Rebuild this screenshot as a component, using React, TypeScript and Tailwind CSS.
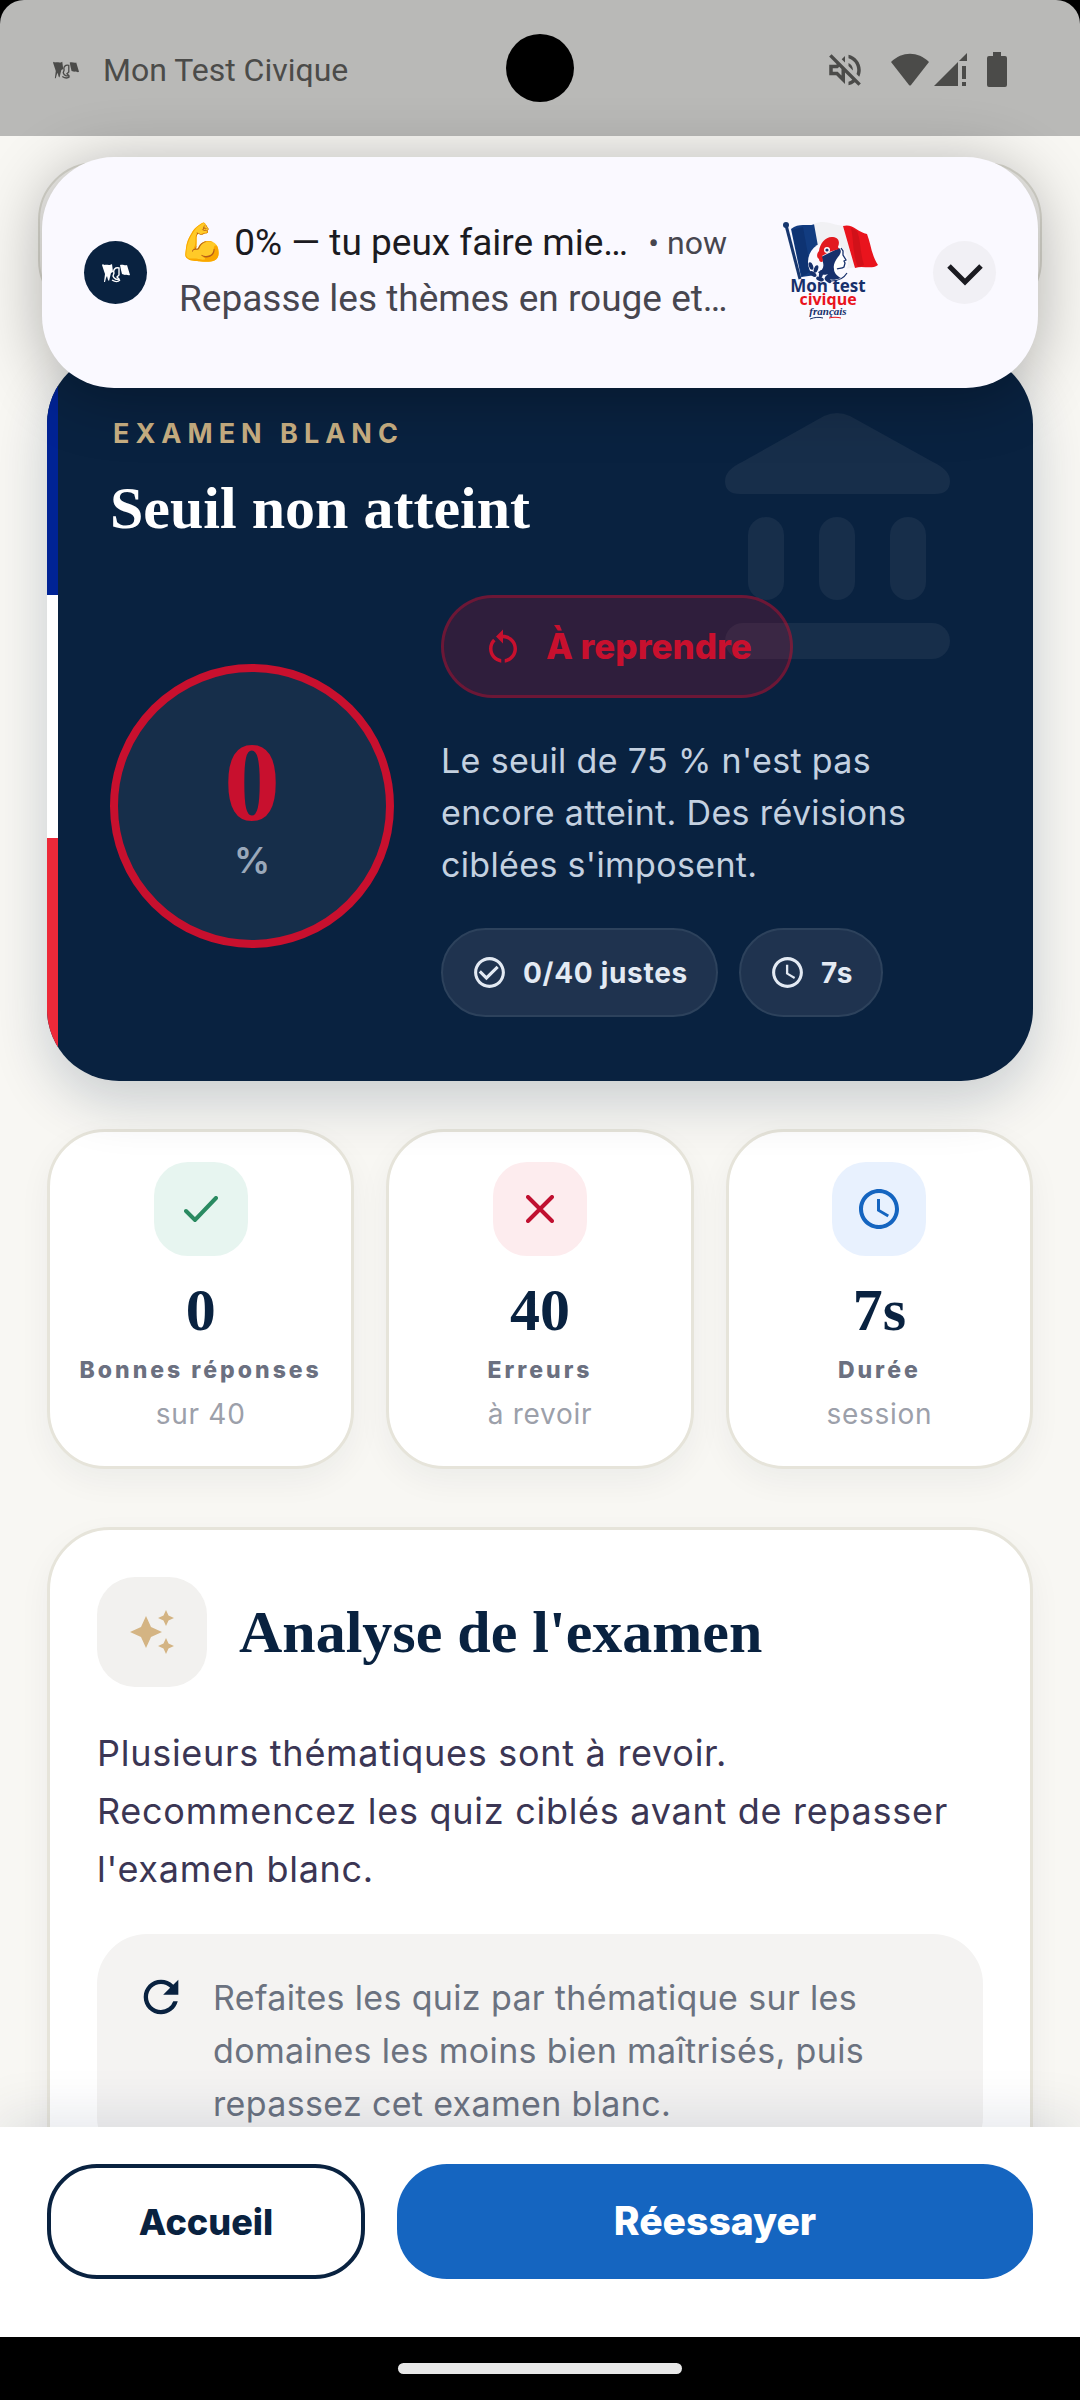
import type { ReactNode } from 'react';
import clsx from 'clsx';
import {
  MdAutoAwesome,
  MdCheckCircleOutline,
  MdOutlineVolumeOff,
  MdRefresh,
  MdRestartAlt,
  MdSchedule,
} from 'react-icons/md';

const sans = "font-['Inter','Liberation_Sans',sans-serif]";
const serif = "font-['Liberation_Serif',serif] font-bold";
const roboto = "font-['Roboto','Liberation_Sans',sans-serif]";

function FlagsGlyph({ className }: { className?: string }) {
  return (
    <svg viewBox="0 0 28 20" className={className} fill="currentColor" aria-hidden="true">
      <path d="M0 2l1-1 1 1c3-1 5 1 8-1l1 8-2 1-2 8-1-1-1-4-1 2-1 4H2l1-8z" />
      <path d="M18 2c3-1 5 1 7 0l3 10c-2 1-3-1-5 0l-3-1-1-4z" />
      <path
        d="M17 5c-4-1-6 2-5 5l-1 3c1 3 4 4 6 3l-2-2 2-2v-3zM10 17c3 2 6 2 8 0"
        fill="none"
        stroke="currentColor"
        strokeWidth="1.4"
      />
    </svg>
  );
}

function BrandLogo() {
  return (
    <svg viewBox="0 0 96 104" className="h-[104px] w-24 shrink-0" role="img" aria-label="Mon test civique français">
      <path d="M8 8C16 1 24 6 32 3l9 50-23 3z" fill="#123c80" />
      <path d="M20 6l8 44-9 6L9 9z" fill="#0a2a63" opacity=".5" />
      <path d="M31 3c11-5 18 1 30 2l11 41-32 7z" fill="#f1f1f4" />
      <path d="M60 5c9-3 15 6 24 8 4 10 4 20 11 31-7 5-15 0-23 3z" fill="#e9141d" />
      <path d="M68 7c3 12 1 25 7 39l6-2c-4-12-3-24-7-34z" fill="#b90d16" opacity=".5" />
      <path d="M3 4l14 54" stroke="#17376f" strokeWidth="3" />
      <circle cx="3" cy="4" r="3" fill="#17376f" />
      <circle cx="45" cy="41" r="20" fill="#faf9ff" />
      {/* profile */}
      <path d="M55 25l5 3 1 6 3 5-3 1v4l-2 3-5 1 1 6 4 4H44z" fill="#fff" />
      <path d="M58 27l2 3v4l3 5-2 1 1 2-1 4c-2 2-5 1-7 2" fill="none" stroke="#17306b" strokeWidth="1.3" />
      <path d="M38 36l18-9c3 2 2 6-1 9-3 4-5 8-4 12 0 4 3 7 7 9-7 3-13 2-16-1l3-3c-5 2-9 0-10-2 6-2 7-7 3-15z" fill="#17306b" />
      <path d="M36 38c-3-2-2-6 0-8 1-8 7-15 14-14 6 1 7 5 5 10l1 2-10 3-7 4 1 5c-1 2-4 1-4-2z" fill="#e21a20" />
      <circle cx="44" cy="29" r="3" fill="#fff" />
      <circle cx="44" cy="29" r="1.6" fill="#17306b" />
      {/* laurel */}
      <g fill="#17306b">
        <ellipse cx="28" cy="45" rx="2" ry="4" transform="rotate(-20 28 45)" />
        <ellipse cx="33" cy="48" rx="2" ry="4" transform="rotate(20 33 48)" />
        <ellipse cx="30" cy="53" rx="2" ry="4" transform="rotate(-55 30 53)" />
        <ellipse cx="38" cy="53" rx="2" ry="4" transform="rotate(10 38 53)" />
        <ellipse cx="37" cy="58" rx="2" ry="4" transform="rotate(-70 37 58)" />
        <ellipse cx="45" cy="59" rx="2" ry="4" transform="rotate(-50 45 59)" />
      </g>
      <path d="M48 60c8 0 13-3 16-8" fill="none" stroke="#17306b" strokeWidth="1.2" />
      <g textAnchor="middle" fontFamily="'Open Sans', sans-serif" fontWeight="700">
        <text x="45" y="71" fontSize="17" fill="#17306b">Mon test</text>
        <text x="45" y="84" fontSize="16" fill="#e9141d">civique</text>
      </g>
      <text
        x="45"
        y="94"
        fontSize="11"
        textAnchor="middle"
        fontFamily="'Liberation Serif', serif"
        fontStyle="italic"
        fontWeight="700"
        fill="#17306b"
      >
        français
      </text>
      <path d="M27 98c5-2 9-2 13-1" stroke="#17306b" strokeWidth="1" fill="none" />
      <path d="M46 97c4-1 8-1 12 0" stroke="#e9141d" strokeWidth="1" fill="none" />
    </svg>
  );
}

function StatusBar() {
  return (
    <header
      className={clsx(
        roboto,
        'relative flex h-[136px] shrink-0 items-center justify-between rounded-t-3xl bg-[#b9b9b7] pt-1 pr-[72px] pl-[53px] text-[#4b4b49]',
      )}
    >
      <div className="flex items-center gap-6">
        <FlagsGlyph className="h-5 w-[26px]" />
        <span className="text-[32px] leading-10">Mon Test Civique</span>
      </div>
      <span className="absolute top-[34px] left-1/2 size-[68px] -translate-x-1/2 rounded-full bg-black" />
      <div className="flex items-center">
        <MdOutlineVolumeOff className="mr-6 size-[42px]" />
        <svg viewBox="0 0 40 34" className="mr-1 h-[34px] w-10" fill="currentColor" aria-hidden="true">
          <path d="M1 9C12-2 28-2 39 9L21 32q-1 1-2 0z" />
        </svg>
        <svg viewBox="0 0 34 34" className="mr-[18px] h-[34px] w-[34px]" fill="currentColor" aria-hidden="true">
          <path d="M33 0v8h-8zM24 9v24H0zM28 13h4v13h-4zM28 29h4v4h-4z" />
        </svg>
        <svg viewBox="0 0 22 36" className="h-9 w-[22px]" fill="currentColor" aria-hidden="true">
          <path d="M7 0h8v4h4q2 0 2 2v27q0 2-2 2H3q-2 0-2-2V6q0-2 2-2h4z" />
        </svg>
      </div>
    </header>
  );
}

function Notification() {
  return (
    <div
      role="alert"
      className={clsx(
        roboto,
        'absolute inset-x-[42px] top-[157px] z-20 flex h-[231px] items-center rounded-[72px] bg-[#faf9ff] px-[42px] shadow-[0_8px_64px_rgba(0,0,0,0.3)]',
      )}
    >
      <span className="flex size-[63px] shrink-0 items-center justify-center rounded-full bg-[#092240] text-white">
        <FlagsGlyph className="h-5 w-7" />
      </span>
      <div className="ml-8 min-w-0 flex-1 pb-1 text-[37px] leading-[56px] whitespace-nowrap">
        <div className="flex items-center justify-between text-[#1b1b21]">
          <span>💪 0% — tu peux faire mie…</span>
          <span className="text-[32px] text-[#47464f]">• now</span>
        </div>
        <p className="text-[#47464f]">Repasse les thèmes en rouge et…</p>
      </div>
      <div className="mr-[54px] ml-[56px]">
        <BrandLogo />
      </div>
      <button
        type="button"
        aria-label="Développer"
        className="flex size-[63px] shrink-0 items-center justify-center rounded-full bg-[#f1f0f5] pt-1 text-[#1b1b21]"
      >
        <svg viewBox="0 0 36 22" className="h-[22px] w-9" fill="none" stroke="currentColor" strokeWidth="5">
          <path d="M2 2l16 16L34 2" />
        </svg>
      </button>
    </div>
  );
}

function Chip({ icon, children }: { icon: ReactNode; children: ReactNode }) {
  return (
    <li className="flex h-[89px] items-center gap-[15px] rounded-full border-2 border-[#2d425c] bg-[#1f334f] px-7 text-[28px] font-bold tracking-wide text-[#e3eaf3]">
      {icon}
      {children}
    </li>
  );
}

function ResultCard() {
  return (
    <section className="relative mt-[34px] flex flex-col overflow-hidden rounded-[72px] bg-[#092240] px-[63px] py-16 shadow-[0_20px_56px_rgba(9,34,64,0.2)]">
      <div className="absolute inset-y-0 left-0 flex w-[11px] flex-col">
        <span className="flex-1 bg-[#002395]" />
        <span className="flex-1 bg-white" />
        <span className="flex-1 bg-[#ed2939]" />
      </div>
      <svg
        viewBox="0 0 225 246"
        className="absolute top-[61px] right-[83px] h-[246px] w-[225px]"
        fill="#172e4a"
        aria-hidden="true"
      >
        <path d="M99 3q13-6 26 0l83 46q17 8 17 19 0 13-15 13H15Q0 81 0 68 0 57 17 49z" />
        <rect x="23" y="104" width="36" height="83" rx="18" />
        <rect x="94" y="104" width="36" height="83" rx="18" />
        <rect x="165" y="104" width="36" height="83" rx="18" />
        <rect x="0" y="210" width="225" height="36" rx="18" />
      </svg>

      <p className="relative pl-[3px] text-[27px] leading-9 font-bold tracking-[6px] text-[#c9b083]">EXAMEN BLANC</p>
      <h1 className={clsx(serif, 'relative mt-5 text-6xl leading-[72px] text-white')}>Seuil non atteint</h1>

      <div className="relative mt-[51px] flex items-center gap-[47px]">
        <div className="flex size-[284px] shrink-0 flex-col items-center justify-center rounded-full border-8 border-[#c8102e] bg-[#162e4a] pb-2">
          <span className={clsx(serif, 'text-[112px] leading-[116px] text-[#c8102e]')}>0</span>
          <span className="text-4xl leading-10 font-semibold text-[#9aa8ba]">%</span>
        </div>
        <div className="flex min-w-0 flex-1 flex-col items-start gap-[37px]">
          <span className="flex h-[103px] items-center gap-[22px] rounded-full border-[3px] border-[#c8102e]/40 bg-[#c8102e]/20 px-[38px] text-[35px] font-extrabold text-[#c8102e]">
            <MdRestartAlt className="size-[42px]" />
            À reprendre
          </span>
          <p className="text-[34px] leading-[52px] tracking-[0.01em] text-[#c4d1e0]">
            Le seuil de 75 % n'est pas
            <br />
            encore atteint. Des révisions
            <br />
            ciblées s'imposent.
          </p>
          <ul className="flex gap-[21px]">
            <Chip icon={<MdCheckCircleOutline className="size-[37px]" />}>0/40 justes</Chip>
            <Chip icon={<MdSchedule className="size-[37px]" />}>7s</Chip>
          </ul>
        </div>
      </div>
    </section>
  );
}

const stats = [
  {
    value: '0',
    label: 'Bonnes réponses',
    hint: 'sur 40',
    tile: 'bg-[#e7f5f0] text-[#2a8a61]',
    icon: (
      <svg viewBox="0 0 34 26" className="h-[26px] w-[34px]" fill="none" stroke="currentColor" strokeWidth="4" strokeLinecap="round">
        <path d="M2 15l9 9L32 2" />
      </svg>
    ),
  },
  {
    value: '40',
    label: 'Erreurs',
    hint: 'à revoir',
    tile: 'bg-[#fdecee] text-[#c01030]',
    icon: (
      <svg viewBox="0 0 28 28" className="size-7" fill="none" stroke="currentColor" strokeWidth="4" strokeLinecap="round">
        <path d="M2 2l24 24M26 2L2 26" />
      </svg>
    ),
  },
  {
    value: '7s',
    label: 'Durée',
    hint: 'session',
    tile: 'bg-[#e8f1fe] text-[#1565c0]',
    icon: <MdSchedule className="size-12" />,
  },
];

function Stats() {
  return (
    <ul className="mt-12 grid grid-cols-3 gap-8">
      {stats.map((stat) => (
        <li
          key={stat.label}
          className="flex flex-col items-center rounded-[58px] border-[3px] border-[#e6e4da] bg-white pt-[30px] pb-[34px] shadow-[0_12px_32px_rgba(9,34,64,0.05)]"
        >
          <span className={clsx('flex size-[94px] items-center justify-center rounded-[34px]', stat.tile)}>
            {stat.icon}
          </span>
          <strong className={clsx(serif, 'mt-[18px] text-6xl leading-[72px] text-[#092240]')}>{stat.value}</strong>
          <span className="mt-2 text-[23px] leading-8 font-extrabold tracking-[3px] whitespace-nowrap text-[#6b7080]">
            {stat.label}
          </span>
          <span className="mt-[10px] text-[28px] leading-9 tracking-wide text-[#9ca0aa]">{stat.hint}</span>
        </li>
      ))}
    </ul>
  );
}

function Analysis() {
  return (
    <section className="mt-[58px] rounded-[63px] border-[3px] border-[#e6e4da] bg-white p-[47px] shadow-[0_12px_32px_rgba(9,34,64,0.05)]">
      <div className="flex items-center gap-8">
        <span className="flex size-[110px] shrink-0 items-center justify-center rounded-[38px] bg-[#f2f1ef] text-[#d4b483]">
          <MdAutoAwesome className="size-12" />
        </span>
        <h2 className={clsx(serif, 'text-6xl leading-[72px] text-[#092240]')}>Analyse de l'examen</h2>
      </div>
      <p className="mt-[37px] text-4xl leading-[58px] tracking-[0.02em] text-[#3b3654]">
        Plusieurs thématiques sont à revoir.
        <br />
        Recommencez les quiz ciblés avant de repasser
        <br />
        l'examen blanc.
      </p>
      <div className="mt-9 flex items-start gap-[26px] rounded-[50px] bg-[#f4f3f2] px-[38px] py-[37px]">
        <MdRefresh className="size-[52px] shrink-0 text-[#092240]" />
        <p className="text-[34px] leading-[53px] tracking-[0.01em] text-[#6b7280]">
          Refaites les quiz par thématique sur les
          <br />
          domaines les moins bien maîtrisés, puis
          <br />
          repassez cet examen blanc.
        </p>
      </div>
    </section>
  );
}

export default function App() {
  return (
    <div className={clsx(sans, 'relative flex h-screen flex-col overflow-hidden bg-black')}>
      <StatusBar />
      <Notification />

      <main className="min-h-0 flex-1 overflow-hidden bg-[#f8f7f3] px-[47px] pt-[26px]">
        {/* app bar, mostly hidden under the notification */}
        <div className="-mx-[9px] h-[156px] rounded-[58px] border-2 border-[#dad9d0] bg-[#f1f0ec]" />
        <ResultCard />
        <Stats />
        <Analysis />
      </main>

      <footer className="relative grid shrink-0 grid-cols-[1fr_2fr] gap-8 bg-white px-[47px] pt-[37px] pb-[58px] shadow-[0_-12px_48px_rgba(9,34,64,0.1)]">
        <button
          type="button"
          className="h-[115px] rounded-[50px] border-4 border-[#092240] text-4xl font-extrabold text-[#092240]"
        >
          Accueil
        </button>
        <button type="button" className="h-[115px] rounded-[50px] bg-[#1565c0] text-[39px] font-extrabold text-white">
          Réessayer
        </button>
      </footer>
      <div className="relative flex h-[63px] shrink-0 items-center justify-center bg-black">
        <span className="h-[11px] w-[284px] rounded-full bg-[#e8e8e8]" />
      </div>
    </div>
  );
}
